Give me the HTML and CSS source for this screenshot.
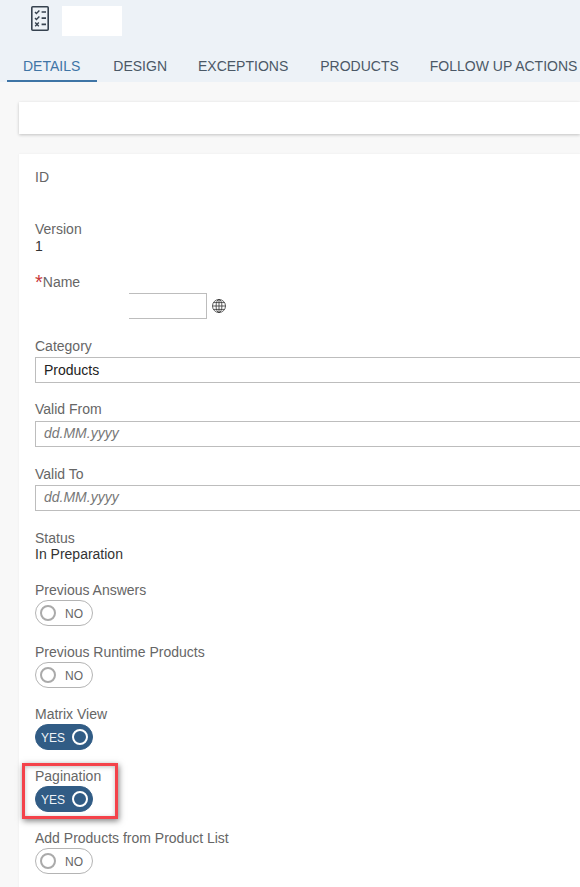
FILE: index.html
```html
<!DOCTYPE html>
<html lang="en">
<head>
<meta charset="utf-8">
<title>Details</title>
<link rel="stylesheet" href="styles.css">
</head>
<body>
<header class="header">
  <div class="title-row">
    <svg class="title-icon" width="18" height="25" viewBox="0 0 18 25" fill="none" stroke="#36424f">
      <rect x="0.8" y="0.8" width="16.4" height="23.4" rx="1" stroke-width="1.6"/>
      <path d="M4 6l1.4 1.4L8.4 4.4M4 12l1.4 1.4 3-3M4.2 16.6l3.6 3.6M7.8 16.6l-3.6 3.6" stroke-width="1.4"/>
      <path d="M10.6 6h4.4M10.6 12.2h4.4M10.6 18.4h4.4" stroke-width="1.7"/>
    </svg>
    <div class="title-mask"></div>
  </div>
  <nav class="tabs">
    <a class="tab tab-active">DETAILS</a>
    <a class="tab tab-tight">DESIGN</a>
    <a class="tab">EXCEPTIONS</a>
    <a class="tab tab-tight">PRODUCTS</a>
    <a class="tab">FOLLOW UP ACTIONS</a>
  </nav>
</header>
<main class="content">
  <div class="card card-empty"></div>
  <section class="card card-form">
    <div class="field field-id"><div class="label">ID</div></div>
    <div class="field field-version"><div class="label">Version</div><div class="value value-spaced">1</div></div>
    <div class="field">
      <div class="label"><span class="required">*</span>Name</div>
      <div class="name-row">
        <div class="name-input"></div>
        <svg class="globe" width="14" height="14" viewBox="0 0 14 14" fill="none" stroke="#333" stroke-width=".8">
          <circle cx="7" cy="7" r="6.5"/>
          <ellipse cx="7" cy="7" rx="2.9" ry="6.5"/>
          <path d="M7 .5v13M.5 7h13M1.5 3.6h11M1.5 10.4h11"/>
        </svg>
      </div>
    </div>
    <div class="field field-tight"><div class="label">Category</div><div class="input input-filled">Products</div></div>
    <div class="field"><div class="label">Valid From</div><div class="input input-date input-low">dd.MM.yyyy</div></div>
    <div class="field"><div class="label">Valid To</div><div class="input input-date">dd.MM.yyyy</div></div>
    <div class="field field-status"><div class="label">Status</div><div class="value">In Preparation</div></div>
    <div class="field field-switch"><div class="label">Previous Answers</div><div class="toggle"><span class="knob"></span><span class="toggle-text">NO</span></div></div>
    <div class="field field-switch"><div class="label">Previous Runtime Products</div><div class="toggle"><span class="knob"></span><span class="toggle-text">NO</span></div></div>
    <div class="field field-switch"><div class="label">Matrix View</div><div class="toggle toggle-on"><span class="toggle-text">YES</span><span class="knob"></span></div></div>
    <div class="field field-switch"><div class="label">Pagination</div><div class="toggle toggle-on"><span class="toggle-text">YES</span><span class="knob"></span></div><div class="highlight"></div></div>
    <div class="field field-switch"><div class="label">Add Products from Product List</div><div class="toggle"><span class="knob"></span><span class="toggle-text">NO</span></div></div>
  </section>
</main>
</body>
</html>
```
FILE: styles.css
```css
* { box-sizing: border-box; }
html, body { margin: 0; height: 100%; }
body {
  width: 580px;
  height: 887px;
  overflow: hidden;
  background: #f8f8f8;
  font-family: "Liberation Sans", Arial, sans-serif;
  font-size: 14px;
  line-height: 16px;
  color: #333;
}
.header { height: 82px; background: #edf2f7; }
.title-row { height: 52px; display: flex; align-items: flex-start; padding: 6px 0 0 31px; }
.title-icon { display: block; width: 18px; height: 25px; }
.title-mask { width: 60px; height: 30px; background: #fff; margin-left: 13px; }
.tabs { display: flex; padding-left: 7px; height: 30px; white-space: nowrap; }
.tab { padding: 6px 16px 0; color: #4b5866; height: 30px; }
.tab-tight { padding-right: 15px; }
.tab-active { color: #3f75a6; border-bottom: 2px solid #3f75a6; padding-right: 17px; }
.content { padding: 20px 0 0 19px; }
.card { background: #fff; box-shadow: 0 1px 3px rgba(0,0,0,.22); }
.card-empty { height: 32px; }
.card-form { margin-top: 20px; height: 760px; padding: 15px 0 0 16px; box-shadow: 0 0 2px rgba(0,0,0,.06); display: flex; flex-direction: column; }
.field { position: relative; margin-bottom: 19px; flex: none; }
.field-id { margin-bottom: 36px; }
.field-version { margin-bottom: 20px; }
.field-tight { margin-bottom: 18px; }
.field-status { margin-bottom: 20px; }
.field-switch { margin-bottom: 18px; }
.label { color: #666; height: 16px; }
.value { color: #333; height: 16px; }
.value-spaced { margin-top: 1px; }
.required { color: #c8373c; font-size: 20px; line-height: 16px; vertical-align: -2px; }
.name-row { display: flex; align-items: center; padding-left: 94px; margin-top: 3px; gap: 5px; }
.name-input { width: 78px; height: 26px; border: 1px solid #bdbdbd; border-left: 0; background: #fff; }
.input { height: 26px; margin-top: 3px; border: 1px solid #bdbdbd; border-right: 0; padding: 4px 8px; background: #fff; line-height: 16px; }
.input-low { margin-top: 4px; }
.input-filled { color: #222; }
.input-date { color: #777; font-style: italic; padding-top: 3px; }
.toggle {
  width: 58px; height: 26px; margin-top: 2px; border-radius: 13px;
  border: 1px solid #b4b4b4; background: #fff; color: #666;
  font-size: 12px; display: flex; align-items: center; justify-content: space-between;
  padding: 0 9px 0 4px;
}
.toggle-text { padding-top: 1px; }
.knob { width: 16px; height: 16px; border-radius: 50%; border: 2px solid #aaa; background: #fff; display: block; }
.toggle-on { background: #315c85; border-color: #315c85; color: #eef3f8; padding: 0 4px 0 5px; }
.toggle-on .knob { background: transparent; border-color: #fff; }
.highlight {
  position: absolute; left: -13px; top: -5px; width: 96px; height: 56px;
  border: 3px solid #f4424a; box-shadow: 1px 2px 6px rgba(0,0,0,.5), inset 0 1px 4px rgba(0,0,0,.25); pointer-events: none;
}
```
